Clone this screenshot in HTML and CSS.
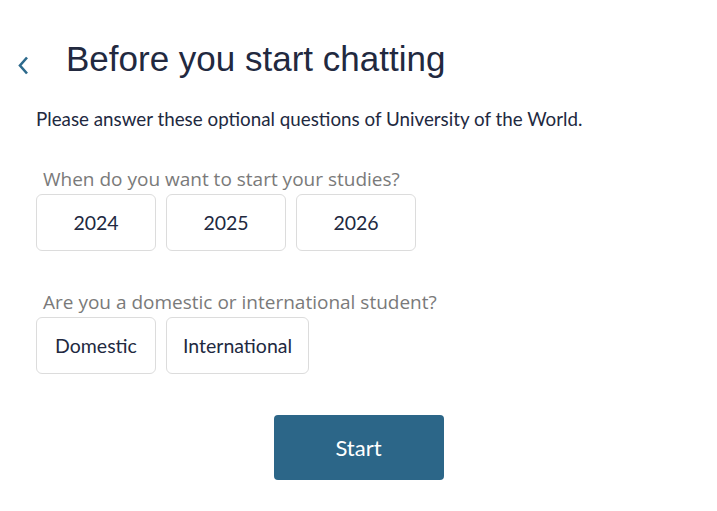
FILE: index.html
```html
<!DOCTYPE html>
<html lang="en">
<head>
  <meta charset="UTF-8">
  <meta name="viewport" content="width=device-width, initial-scale=1.0">
  <title>Before you start chatting</title>
  <link rel="stylesheet" href="styles.css">
</head>
<body>
  <div class="header">
    <a href="#" class="back" aria-label="Back">
      <svg width="14" height="20" viewBox="0 0 14 20"><path d="M11 2.5 L4 10.5 L11 18.5" fill="none" stroke="#2d6a8c" stroke-width="2.6"/></svg>
    </a>
    <h1>Before you start chatting</h1>
  </div>

  <p class="intro">Please answer these optional questions of University of the World.</p>

  <div class="question">
    <div class="question-label">When do you want to start your studies?</div>
    <div class="options">
      <button class="option">2024</button>
      <button class="option">2025</button>
      <button class="option">2026</button>
    </div>
  </div>

  <div class="question">
    <div class="question-label">Are you a domestic or international student?</div>
    <div class="options">
      <button class="option">Domestic</button>
      <button class="option">International</button>
    </div>
  </div>

  <div class="actions">
    <button class="start">Start</button>
  </div>
</body>
</html>
```

FILE: styles.css
```css
body {
  margin: 0;
  padding: 0 36px;
  font-family: Lato, "Noto Sans", sans-serif;
  color: #22293f;
  background-color: white;
}
.header {
  display: flex;
  align-items: center;
  padding-top: 35px;
  margin-left: -20px;
}
.back {
  display: flex;
  width: 14px;
  margin-top: 12px;
  margin-right: 36px;
}
h1 {
  margin: 0;
  font-family: "Liberation Sans", Arial, sans-serif;
  font-weight: normal;
  font-size: 35px;
  line-height: 48px;
  color: #22293f;
}
.intro {
  margin: 24px 0 0;
  font-size: 18.8px;
  line-height: 24px;
}
.question {
  margin-top: 36px;
}
.question + .question {
  margin-top: 39px;
}
.question-label {
  font-family: "Open Sans", sans-serif;
  font-size: 19px;
  line-height: 24px;
  color: #7a7a7a;
  padding-left: 7px;
  margin-bottom: 3px;
}
.options {
  display: flex;
  gap: 10px;
}
.option {
  min-width: 120px;
  height: 57px;
  padding: 0 16px;
  background: white;
  border: 1px solid #dcdcdc;
  border-radius: 6px;
  font-family: Lato, "Noto Sans", sans-serif;
  font-size: 19.5px;
  color: #22293f;
  cursor: pointer;
}
.actions {
  display: flex;
  justify-content: center;
  margin-top: 41px;
}
.start {
  width: 170px;
  height: 65px;
  background-color: #2c6688;
  color: white;
  border: none;
  border-radius: 4px;
  font-family: Lato, "Noto Sans", sans-serif;
  font-size: 22px;
  cursor: pointer;
}
```
